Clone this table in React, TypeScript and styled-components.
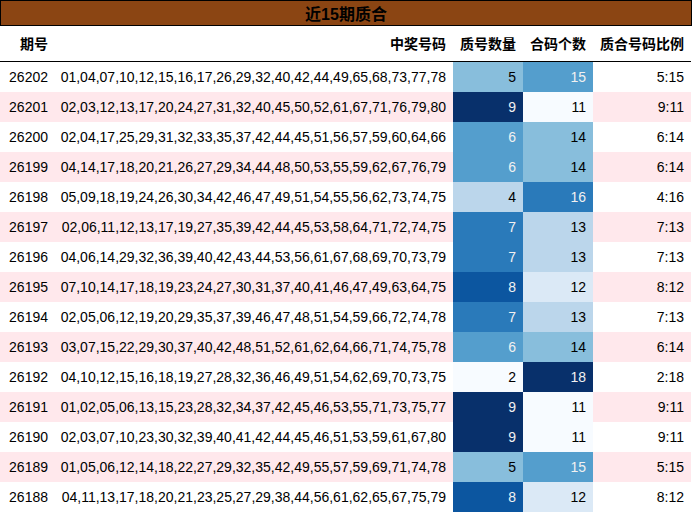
import React from "react";
import styled, { createGlobalStyle } from "styled-components";

const Global = createGlobalStyle`
  html, body { margin: 0; padding: 0; background: #ffffff; }
  body { font-family: "Liberation Sans", Arial, "Noto Sans CJK SC", sans-serif; color: #000; }
`;

const BLUES = [
  [0xf7, 0xfb, 0xff],
  [0xde, 0xeb, 0xf7],
  [0xc6, 0xdb, 0xef],
  [0x9e, 0xca, 0xe1],
  [0x6b, 0xae, 0xd6],
  [0x42, 0x92, 0xc6],
  [0x21, 0x71, 0xb5],
  [0x08, 0x51, 0x9c],
  [0x08, 0x30, 0x6b],
];

function blues(t: number): { bg: string; light: boolean } {
  const x = Math.max(0, Math.min(1, t)) * 8;
  const i = Math.min(7, Math.floor(x));
  const f = x - i;
  const c = BLUES[i].map((v, k) => Math.round(v + (BLUES[i + 1][k] - v) * f));
  const lum = (0.299 * c[0] + 0.587 * c[1] + 0.114 * c[2]) / 255;
  return { bg: `rgb(${c[0]},${c[1]},${c[2]})`, light: lum < 0.6 };
}

type Row = { id: string; nums: string; p: number; c: number };

const rows: Row[] = [
  { id: "26202", nums: "01,04,07,10,12,15,16,17,26,29,32,40,42,44,49,65,68,73,77,78", p: 5, c: 15 },
  { id: "26201", nums: "02,03,12,13,17,20,24,27,31,32,40,45,50,52,61,67,71,76,79,80", p: 9, c: 11 },
  { id: "26200", nums: "02,04,17,25,29,31,32,33,35,37,42,44,45,51,56,57,59,60,64,66", p: 6, c: 14 },
  { id: "26199", nums: "04,14,17,18,20,21,26,27,29,34,44,48,50,53,55,59,62,67,76,79", p: 6, c: 14 },
  { id: "26198", nums: "05,09,18,19,24,26,30,34,42,46,47,49,51,54,55,56,62,73,74,75", p: 4, c: 16 },
  { id: "26197", nums: "02,06,11,12,13,17,19,27,35,39,42,44,45,53,58,64,71,72,74,75", p: 7, c: 13 },
  { id: "26196", nums: "04,06,14,29,32,36,39,40,42,43,44,53,56,61,67,68,69,70,73,79", p: 7, c: 13 },
  { id: "26195", nums: "07,10,14,17,18,19,23,24,27,30,31,37,40,41,46,47,49,63,64,75", p: 8, c: 12 },
  { id: "26194", nums: "02,05,06,12,19,20,29,35,37,39,46,47,48,51,54,59,66,72,74,78", p: 7, c: 13 },
  { id: "26193", nums: "03,07,15,22,29,30,37,40,42,48,51,52,61,62,64,66,71,74,75,78", p: 6, c: 14 },
  { id: "26192", nums: "04,10,12,15,16,18,19,27,28,32,36,46,49,51,54,62,69,70,73,75", p: 2, c: 18 },
  { id: "26191", nums: "01,02,05,06,13,15,23,28,32,34,37,42,45,46,53,55,71,73,75,77", p: 9, c: 11 },
  { id: "26190", nums: "02,03,07,10,23,30,32,39,40,41,42,44,45,46,51,53,59,61,67,80", p: 9, c: 11 },
  { id: "26189", nums: "01,05,06,12,14,18,22,27,29,32,35,42,49,55,57,59,69,71,74,78", p: 5, c: 15 },
  { id: "26188", nums: "04,11,13,17,18,20,21,23,25,27,29,38,44,56,61,62,65,67,75,79", p: 8, c: 12 },
];

const Page = styled.div`
  width: 692px;
  display: flex;
  flex-direction: column;
`;

const TitleBar = styled.div`
  box-sizing: border-box;
  height: 26px;
  width: 692px;
  background: #8b4513;
  border: 1px solid #000;
  display: flex;
  align-items: center;
  justify-content: center;
  font-size: 16px;
  font-weight: bold;
  color: #000;
`;

const Grid = styled.div`
  display: grid;
  grid-template-columns: 55px 398px 70px 70px 98px;
  width: 691px;
`;

const HeadCell = styled.div`
  box-sizing: border-box;
  height: 36px;
  border-bottom: 1px solid #000;
  display: flex;
  align-items: center;
  justify-content: flex-end;
  padding: 0 7px 1px 0;
  font-size: 14px;
  font-weight: bold;
  white-space: nowrap;
`;

const Cell = styled.div<{ $stripe: boolean }>`
  box-sizing: border-box;
  height: 30px;
  display: flex;
  align-items: center;
  justify-content: flex-end;
  padding-right: 7px;
  font-size: 14px;
  white-space: nowrap;
  background: ${(p) => (p.$stripe ? "#ffe8ec" : "#ffffff")};
`;

const HeatCell = styled.div<{ $bg: string; $light: boolean }>`
  box-sizing: border-box;
  height: 30px;
  display: flex;
  align-items: center;
  justify-content: flex-end;
  padding-right: 7px;
  font-size: 14px;
  background: ${(p) => p.$bg};
  color: ${(p) => (p.$light ? "#f1f1f1" : "#000000")};
`;

export default function App() {
  return (
    <>
      <Global />
      <Page>
        <TitleBar>近15期质合</TitleBar>
        <Grid>
          <HeadCell>期号</HeadCell>
          <HeadCell>中奖号码</HeadCell>
          <HeadCell>质号数量</HeadCell>
          <HeadCell>合码个数</HeadCell>
          <HeadCell>质合号码比例</HeadCell>
          {rows.map((r, i) => {
            const stripe = i % 2 === 1;
            const pc = blues((r.p - 2) / 7);
            const cc = blues((r.c - 11) / 7);
            return (
              <React.Fragment key={r.id}>
                <Cell $stripe={stripe}>{r.id}</Cell>
                <Cell $stripe={stripe}>{r.nums}</Cell>
                <HeatCell $bg={pc.bg} $light={pc.light}>{r.p}</HeatCell>
                <HeatCell $bg={cc.bg} $light={cc.light}>{r.c}</HeatCell>
                <Cell $stripe={stripe}>{`${r.p}:${r.c}`}</Cell>
              </React.Fragment>
            );
          })}
        </Grid>
      </Page>
    </>
  );
}
